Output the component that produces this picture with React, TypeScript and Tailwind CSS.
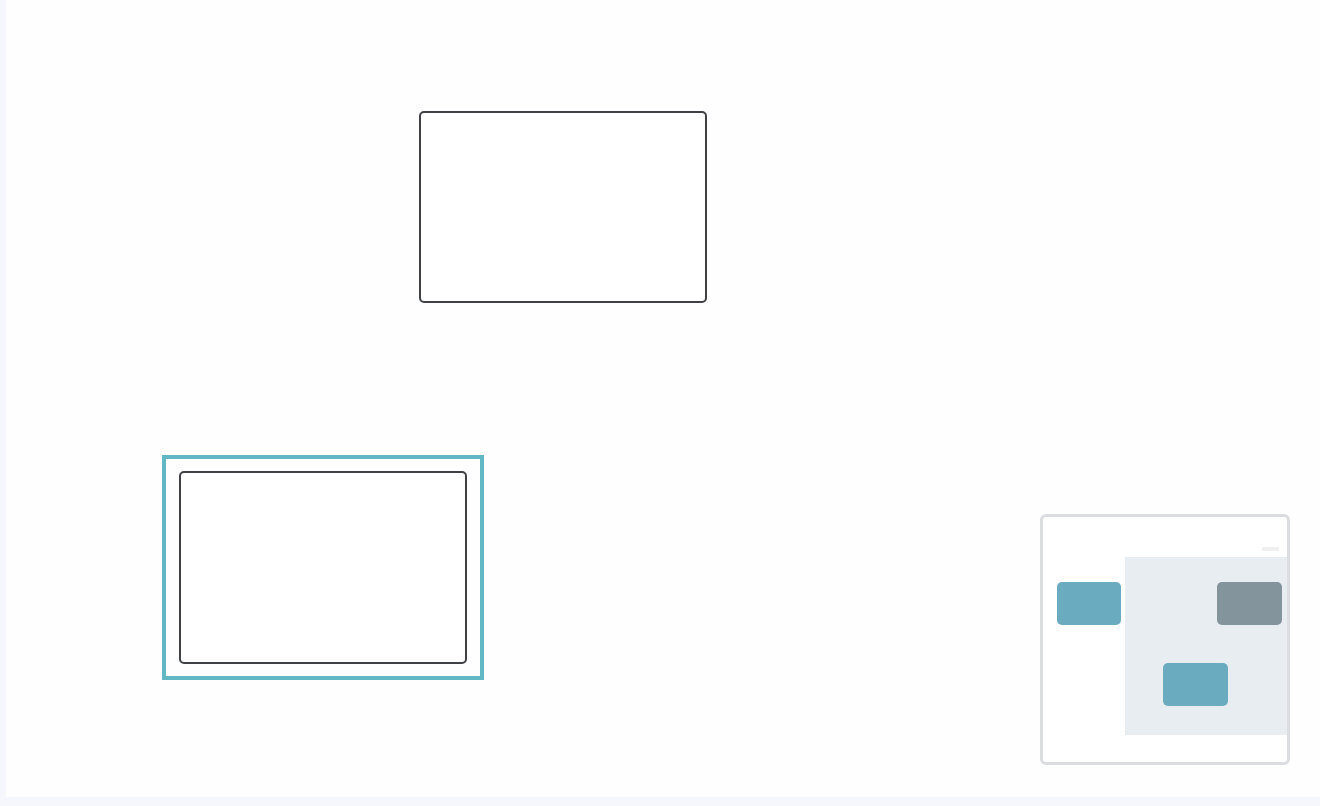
import React from "react";

type Box = { id: string; x: number; y: number; w: number; h: number; selected?: boolean };

// flow nodes, placed on the canvas by their own coordinates
const nodes: Box[] = [
  { id: "a", x: 413, y: 111, w: 288, h: 192 },
  { id: "b", x: 173, y: 471, w: 288, h: 193, selected: true },
];

// miniature of the whole graph, in minimap pixels
const miniNodes = [
  { id: "m1", x: 14, y: 65, w: 64, h: 43, fill: "#6aabbf" },
  { id: "m2", x: 174, y: 65, w: 65, h: 43, fill: "#84949c" },
  { id: "m3", x: 120, y: 146, w: 65, h: 43, fill: "#6aabbf" },
];

function MiniMap() {
  return (
    <div className="absolute right-[30px] bottom-[32px] w-[250px] h-[251px] rounded-[6px] border-[3px] border-[#dcdde0] bg-white overflow-hidden">
      <svg width="244" height="245" viewBox="0 0 244 245" className="block">
        <rect x="82" y="40" width="162" height="178" fill="#e8edf1" />
        <rect x="219" y="30" width="17" height="4" fill="#f0f0f0" />
        {miniNodes.map((n) => (
          <rect key={n.id} x={n.x} y={n.y} width={n.w} height={n.h} rx="5" fill={n.fill} />
        ))}
      </svg>
    </div>
  );
}

export default function App() {
  return (
    <div className="w-full h-[806px] bg-[#f6f7fc] pl-[6px] pb-[9px] flex">
      <div className="relative flex-1 bg-[#fefefe] overflow-hidden">
        {nodes.map((n) => (
          <div
            key={n.id}
            className="absolute"
            style={{ left: n.x, top: n.y, width: n.w, height: n.h }}
          >
            {n.selected && (
              <div className="absolute -left-[17px] -top-[16px] -right-[17px] -bottom-[16px] border-4 border-[#62b7c4]" />
            )}
            <div className="relative w-full h-full rounded-[5px] border-2 border-[#3e4043] bg-white" />
          </div>
        ))}
        <MiniMap />
      </div>
    </div>
  );
}
